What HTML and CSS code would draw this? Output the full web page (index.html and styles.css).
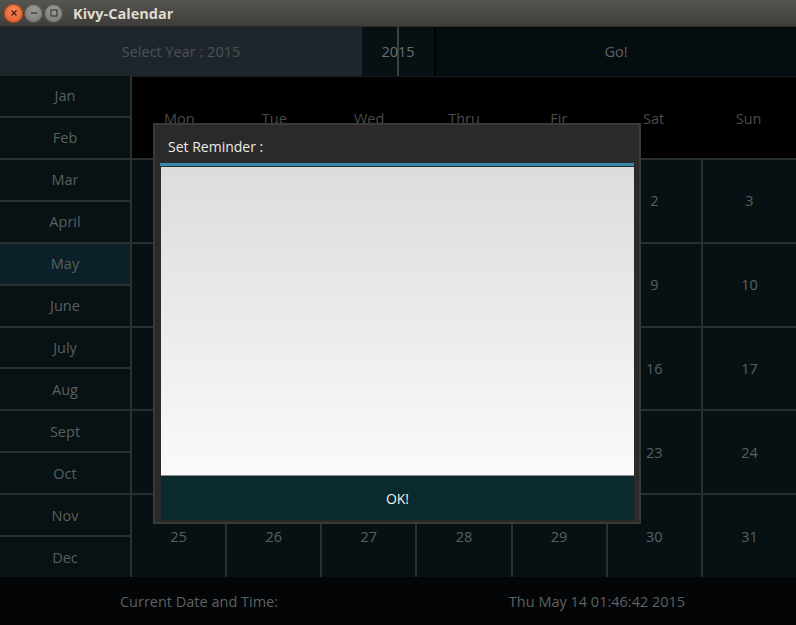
FILE: index.html
```html
<!DOCTYPE html>
<html>
<head>
<meta charset="utf-8">
<title>Kivy-Calendar</title>
<link rel="stylesheet" href="styles.css">
</head>
<body>
<div class="window">
  <div class="titlebar">
    <div class="wbtns">
      <span class="wbtn close"><svg width="8" height="8" viewBox="0 0 8 8"><path d="M1.5 1.5L6.5 6.5M6.5 1.5L1.5 6.5" stroke="#5a1a08" stroke-width="1.4"/></svg></span>
      <span class="wbtn"><svg width="8" height="8" viewBox="0 0 8 8"><path d="M1 4H7" stroke="#3a3a38" stroke-width="1.4"/></svg></span>
      <span class="wbtn"><svg width="8" height="8" viewBox="0 0 8 8"><rect x="1" y="1" width="6" height="6" fill="none" stroke="#3a3a38" stroke-width="1.2"/></svg></span>
    </div>
    <span class="wtitle">Kivy-Calendar</span>
  </div>
  <div class="app">
    <div class="topbar">
      <div class="select-label">Select Year : 2015</div>
      <div class="year-box">
        <div class="year-cell"></div>
        <div class="year-cell"></div>
        <span class="year-text">2015</span>
      </div>
      <div class="go">Go!</div>
    </div>
    <div class="main">
      <div class="months">
        <div class="month">Jan</div>
        <div class="month">Feb</div>
        <div class="month">Mar</div>
        <div class="month">April</div>
        <div class="month active">May</div>
        <div class="month">June</div>
        <div class="month">July</div>
        <div class="month">Aug</div>
        <div class="month">Sept</div>
        <div class="month">Oct</div>
        <div class="month">Nov</div>
        <div class="month">Dec</div>
      </div>
      <div class="calendar">
        <div class="dayhead">
          <div class="dname">Mon</div><div class="dname">Tue</div><div class="dname">Wed</div><div class="dname">Thru</div><div class="dname">Fir</div><div class="dname">Sat</div><div class="dname">Sun</div>
        </div>
        <div class="days">
          <div class="day"></div><div class="day"></div><div class="day"></div><div class="day"></div><div class="day">1</div><div class="day">2</div><div class="day">3</div>
          <div class="day">4</div><div class="day">5</div><div class="day">6</div><div class="day">7</div><div class="day">8</div><div class="day">9</div><div class="day">10</div>
          <div class="day">11</div><div class="day">12</div><div class="day">13</div><div class="day">14</div><div class="day">15</div><div class="day">16</div><div class="day">17</div>
          <div class="day">18</div><div class="day">19</div><div class="day">20</div><div class="day">21</div><div class="day">22</div><div class="day">23</div><div class="day">24</div>
          <div class="day">25</div><div class="day">26</div><div class="day">27</div><div class="day">28</div><div class="day">29</div><div class="day">30</div><div class="day">31</div>
        </div>
      </div>
    </div>
    <div class="bottombar">
      <div class="bcell">Current Date and Time:</div>
      <div class="bcell">Thu May 14 01:46:42 2015</div>
    </div>
    <div class="popup">
      <div class="ptitle">Set Reminder :</div>
      <div class="psep"></div>
      <div class="pinput"></div>
      <div class="pok">OK!</div>
    </div>
  </div>
</div>
</body>
</html>
```
FILE: styles.css
```css
* { box-sizing: border-box; }
html, body { margin: 0; padding: 0; background: #000; }
body { width: 796px; height: 625px; overflow: hidden; font-family: "Open Sans", "Noto Sans", sans-serif; }
.window { width: 796px; height: 625px; display: flex; flex-direction: column; }
.titlebar {
  height: 27px; flex: none; display: flex; align-items: center;
  background: linear-gradient(#55544f, #3e3d39);
  border-bottom: 1px solid #2e2d2a;
}
.wbtns { display: flex; gap: 1px; padding-left: 4px; }
.wbtn {
  width: 19px; height: 19px; border-radius: 50%;
  display: flex; align-items: center; justify-content: center;
  background: radial-gradient(circle at 50% 35%, #9a9994, #74736e);
  box-shadow: inset 0 0 0 1px #4a4945;
}
.wbtn.close { background: radial-gradient(circle at 50% 35%, #f58a5e, #df5424); box-shadow: inset 0 0 0 1px #a8431c; }
.wtitle { margin-left: 10px; color: #dfdbd2; font-weight: bold; font-size: 14.5px; font-family: "Open Sans", sans-serif; }
.app { position: relative; flex: 1; display: flex; flex-direction: column; }
.topbar { height: 50px; flex: none; display: flex; border-bottom: 1px solid #1a1d1f; }
.select-label {
  width: 362px; background: #1e252b; color: #4a5257; font-size: 14.5px;
  display: flex; align-items: center; justify-content: center;
}
.year-box { position: relative; width: 72px; display: flex; gap: 2px; background: #3a3f41; }
.year-cell { flex: 1; background: #071013; }
.year-text {
  position: absolute; left: 0; right: 0; top: 0; bottom: 0;
  display: flex; align-items: center; justify-content: center;
  color: #6a6f71; font-size: 14.5px;
}
.go {
  flex: 1; margin-left: 2px; background: #060d10; color: #5e6365; font-size: 14.5px;
  display: flex; align-items: center; justify-content: center;
}
.main { height: 500px; flex: none; display: flex; }
.months {
  width: 132px; display: grid; grid-template-rows: repeat(12, 1fr); row-gap: 2px;
  background: #293133; padding-right: 2px; margin-top: -1px;
}
.month {
  background: #081114; color: #59605f; font-size: 14.5px;
  display: flex; align-items: center; justify-content: center;
}
.month.active { background: #0b2029; }
.calendar { flex: 1; display: flex; flex-direction: column; }
.dayhead { height: 83px; display: grid; grid-template-columns: repeat(7, 1fr); background: #000; border-bottom: 2px solid #283032; }
.dname { color: #474b4c; font-size: 14.5px; display: flex; align-items: center; justify-content: center; padding-top: 2px; }
.days {
  flex: 1; display: grid; grid-template-columns: repeat(7, 1fr); grid-template-rows: repeat(5, 1fr);
  gap: 2px; background: #283032;
}
.day { background: #071013; color: #5a6062; font-size: 14.5px; display: flex; align-items: center; justify-content: center; }
.bottombar { flex: 1; display: flex; background: #030506; }
.bcell { flex: 1; display: flex; align-items: center; justify-content: center; color: #5c6163; font-size: 14.5px; }
.popup {
  position: absolute; left: 153px; top: 96px; width: 488px; height: 401px;
  background: #2a2a2a; border: 2px solid #3a3936;
  padding: 0 5px 2px 6px; display: flex; flex-direction: column;
}
.ptitle { height: 38px; flex: none; color: #ecebe8; font-size: 14px; display: flex; align-items: center; padding-left: 7px; padding-top: 4px; }
.psep { height: 3px; flex: none; background: #3789aa; margin-left: -1px; margin-bottom: 1px; }
.pinput { height: 309px; flex: none; background: linear-gradient(#dcdcdc, #fafafa); border-bottom: 1px solid #8d9193; }
.pok { flex: 1; background: #0b2a2d; color: #f2f2f2; font-size: 14px; display: flex; align-items: center; justify-content: center; }
```
